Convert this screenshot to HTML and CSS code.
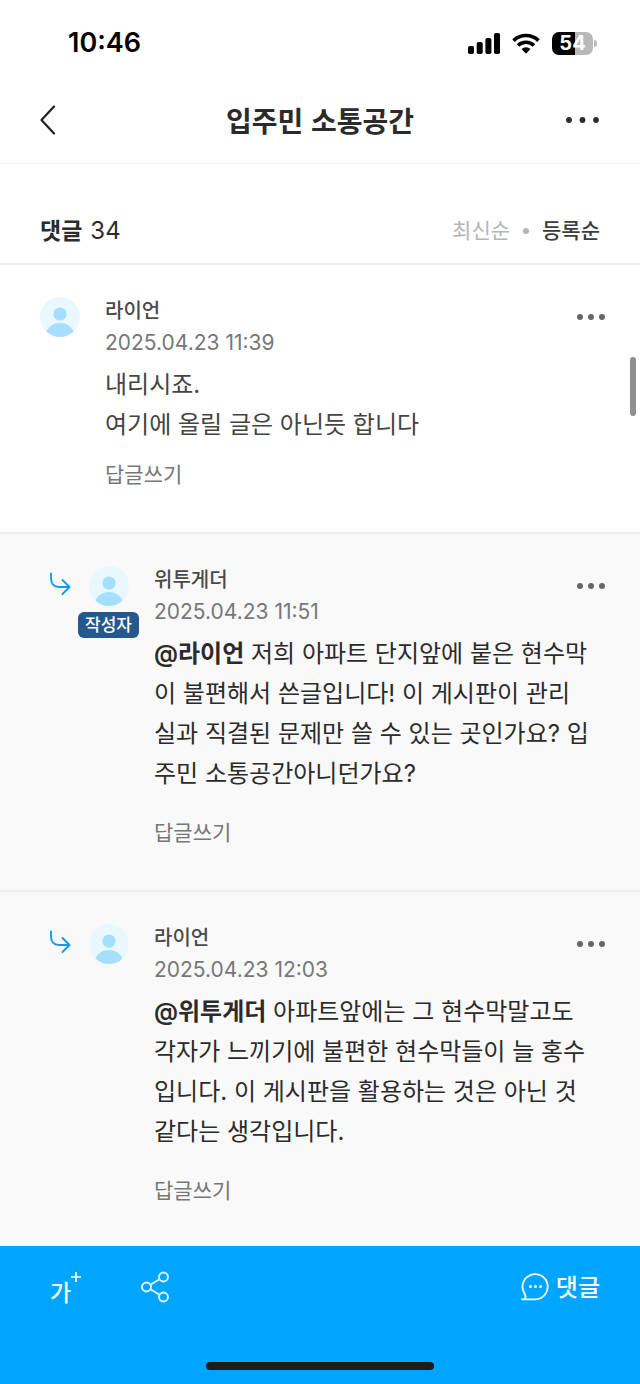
FILE: index.html
```html
<!DOCTYPE html>
<html lang="ko">
<head>
<meta charset="utf-8">
<meta name="viewport" content="width=device-width, initial-scale=1">
<title>입주민 소통공간</title>
<link rel="stylesheet" href="styles.css">
</head>
<body>
<svg class="defs" aria-hidden="true">
  <symbol id="avatar" viewBox="0 0 40 40">
    <circle cx="20" cy="20" r="20" fill="#e9f8ff"/>
    <circle cx="20" cy="17" r="6.600" fill="#a5dfff"/>
    <path d="M6.500 34.500C9 29 14 26 20 26s11 3 13.500 8.500C30 38 25.500 40 20 40S10 38 6.500 34.500Z" fill="#a5dfff"/>
  </symbol>
  <symbol id="dots" viewBox="0 0 30 8">
    <circle cx="4" cy="4" r="3"/><circle cx="15" cy="4" r="3"/><circle cx="26" cy="4" r="3"/>
  </symbol>
  <symbol id="branch" viewBox="0 0 22 24">
    <path d="M2 1.500V6c0 6 3 9 8 9h10M13.500 8l7 7-7 7" fill="none" stroke="#119bf0" stroke-width="1.900" stroke-linecap="round" stroke-linejoin="round"/>
  </symbol>
</svg>
<div class="status">
  <span class="clock">10:46</span>
  <div class="status-icons">
    <svg class="signal" viewBox="0 0 32 21"><rect y="13" width="6" height="8" rx="1.800"/><rect x="8.700" y="9" width="6" height="12" rx="1.800"/><rect x="17.400" y="5" width="6" height="16" rx="1.800"/><rect x="26" width="6" height="21" rx="1.800"/></svg>
    <svg class="wifi" viewBox="0 0 28 21"><g fill="none" stroke="#000" stroke-width="3.600"><path d="M1.500 7.600a18 18 0 0 1 25 0"/><path d="M6 12.500a11.500 11.500 0 0 1 16 0"/></g><path d="M9.500 16a6.600 6.600 0 0 1 9 0L14 20.800Z"/></svg>
    <div class="battery"><span class="level">54</span><i class="cap"></i></div>
  </div>
</div>
<header class="header">
  <button class="icon-btn" aria-label="뒤로"><svg class="back" viewBox="0 0 16 30"><path d="M14 1.500 1.500 15 14 28.500" fill="none" stroke="#222" stroke-width="2.200" stroke-linecap="round" stroke-linejoin="round"/></svg></button>
  <h1 class="title">입주민 소통공간</h1>
  <button class="icon-btn" aria-label="메뉴"><svg class="menu" viewBox="0 0 34 8" fill="#2b2b2b"><circle cx="3" cy="4" r="2.900"/><circle cx="16.500" cy="4" r="2.900"/><circle cx="30" cy="4" r="2.900"/></svg></button>
</header>
<section class="summary">
  <h2 class="count"><b>댓글</b><span>34</span></h2>
  <div class="sort"><button class="sort-btn">최신순</button><i class="sort-dot"></i><button class="sort-btn selected">등록순</button></div>
</section>
<main class="list">
  <article class="comment">
    <div class="who"><svg class="avatar"><use href="#avatar"/></svg></div>
    <div class="content">
      <h3 class="name">라이언</h3>
      <time class="date">2025.04.23 11:39</time>
      <p class="text">내리시죠.<br>여기에 올릴 글은 아닌듯 합니다</p>
      <button class="answer">답글쓰기</button>
    </div>
    <button class="more" aria-label="더보기"><svg class="dots"><use href="#dots"/></svg></button>
  </article>
  <article class="comment reply">
    <svg class="branch"><use href="#branch"/></svg>
    <div class="who"><svg class="avatar"><use href="#avatar"/></svg><span class="badge">작성자</span></div>
    <div class="content">
      <h3 class="name">위투게더</h3>
      <time class="date">2025.04.23 11:51</time>
      <p class="text"><b>@라이언</b> 저희 아파트 단지앞에 붙은 현수막<br>이 불편해서 쓴글입니다! 이 게시판이 관리<br>실과 직결된 문제만 쓸 수 있는 곳인가요? 입<br>주민 소통공간아니던가요?</p>
      <button class="answer">답글쓰기</button>
    </div>
    <button class="more" aria-label="더보기"><svg class="dots"><use href="#dots"/></svg></button>
  </article>
  <article class="comment reply">
    <svg class="branch"><use href="#branch"/></svg>
    <div class="who"><svg class="avatar"><use href="#avatar"/></svg></div>
    <div class="content">
      <h3 class="name">라이언</h3>
      <time class="date">2025.04.23 12:03</time>
      <p class="text"><b>@위투게더</b> 아파트앞에는 그 현수막말고도<br>각자가 느끼기에 불편한 현수막들이 늘 홍수<br>입니다. 이 게시판을 활용하는 것은 아닌 것<br>같다는 생각입니다.</p>
      <button class="answer">답글쓰기</button>
    </div>
    <button class="more" aria-label="더보기"><svg class="dots"><use href="#dots"/></svg></button>
  </article>
</main>
<footer class="bar">
  <div class="tools">
    <button class="tool" aria-label="글자 크게"><span class="ga">가</span><svg class="plus" viewBox="0 0 10 10"><path d="M5 0v10M0 5h10" stroke="#fff" stroke-width="1.700"/></svg></button>
    <button class="tool" aria-label="공유"><svg class="share" viewBox="0 0 28 32" fill="none" stroke="#e4f6ff" stroke-width="1.900"><circle cx="5.500" cy="16" r="4.500"/><circle cx="22.500" cy="6" r="4.500"/><circle cx="22.500" cy="26" r="4.500"/><path d="m9.500 13.700 9-5.400M9.500 18.300l9 5.400"/></svg></button>
    <button class="tool write"><svg class="bubble" viewBox="0 0 28 28"><path d="M1 26.300h13.500A12.600 12.600 0 1 0 3.500 20.500C4.500 22.500 5 23.500 4.500 24.500 4 25.700 2.500 26.300 1 26.300Z" fill="none" stroke="#fff" stroke-width="1.800" stroke-linejoin="round"/><g fill="#fff"><circle cx="9.500" cy="13.500" r="1.500"/><circle cx="14.500" cy="13.500" r="1.500"/><circle cx="19.500" cy="13.500" r="1.500"/></g></svg><span class="write-label">댓글</span></button>
  </div>
  <div class="home"></div>
</footer>
<div class="thumb"></div>
</body>
</html>
```
FILE: styles.css
```css
* { box-sizing: border-box; margin: 0; }
body {
  position: relative;
  display: flex;
  flex-direction: column;
  min-height: 100vh;
  background: #fff;
  color: #2b2b2b;
  font-family: Inter, "Noto Sans CJK KR", sans-serif;
}
button { padding: 0; border: 0; background: none; color: inherit; font: inherit; cursor: pointer; }
svg { display: block; flex: none; }
.defs { position: absolute; width: 0; height: 0; }

.status { display: flex; justify-content: space-between; align-items: center; height: 76px; padding: 10px 47px 0 68px; }
.clock { color: #000; font-size: 27px; font-weight: 600; line-height: 32px; }
.status-icons { display: flex; align-items: center; gap: 12px; }
.signal { width: 32px; height: 21px; }
.wifi { width: 28px; height: 21px; }
.battery { position: relative; width: 41px; height: 23px; border-radius: 7px; background: linear-gradient(90deg, #000 55%, #b9b9b9 55%); }
.level { display: block; color: #fff; font-size: 20px; font-weight: 700; line-height: 23px; text-align: center; }
.cap { position: absolute; top: 8px; right: -4px; width: 3px; height: 7px; border-radius: 0 3px 3px 0; background: #b9b9b9; }

.header { display: flex; justify-content: space-between; align-items: center; height: 88px; padding: 0 40px; border-bottom: 1px solid #f0f0f0; }
.icon-btn { display: flex; align-items: center; width: 34px; height: 40px; }
.back { width: 16px; height: 30px; }
.menu { width: 34px; height: 8px; }
.title { font-family: "Noto Sans CJK KR", sans-serif; font-size: 28px; font-weight: 600; line-height: 40px; }

.summary { display: flex; justify-content: space-between; align-items: center; height: 101px; padding: 34px 40px 0; border-bottom: 2px solid #ededed; }
.count { display: flex; gap: 8px; font-size: 24px; font-weight: 400; line-height: 32px; }
.count b { font-size: 23px; font-weight: 700; }
.sort { display: flex; align-items: center; gap: 13px; color: #b4b4b4; font-size: 21px; line-height: 32px; }
.sort-dot { width: 6px; height: 6px; border-radius: 50%; background: #b4b4b4; }
.selected { color: #3c3c3c; font-weight: 500; }

.list { display: flex; flex-direction: column; flex: 1; }
.comment { position: relative; display: flex; padding: 30px 40px 41px; border-bottom: 2px solid #ededed; }
.who { position: relative; width: 65px; padding-top: 2px; }
.avatar { width: 40px; height: 40px; }
.content { flex: 1; min-width: 0; }
.name { color: #4a4a4a; font-size: 20px; font-weight: 500; line-height: 32px; }
.date { display: block; color: #777; font-size: 21px; line-height: 32px; }
.text { margin-top: 6px; color: #444; font-size: 24px; line-height: 40px; }
.text b { font-weight: 600; }
.answer { margin-top: 14px; color: #777; font-size: 21px; line-height: 32px; }
.more { position: absolute; top: 46px; right: 34px; padding: 2px 0; }
.dots { width: 30px; height: 8px; fill: #666; }

.reply { padding-left: 49px; background: #f9f9f9; }
.reply .text { color: #2b2b2b; }
.reply .answer { margin-top: 23px; }
.reply:last-child { flex: 1; padding-bottom: 32px; border-bottom: 0; }
.branch { width: 22px; height: 24px; margin: 8px 18px 0 0; }
.badge { position: absolute; top: 48px; left: -11px; width: 61px; border-radius: 6px; background: #24588f; color: #fff; font-size: 17px; font-weight: 500; line-height: 26px; text-align: center; }

.bar { padding: 24px 40px 14px; background: #00a5ff; color: #fff; }
.tools { display: flex; align-items: center; height: 36px; margin-bottom: 56px; }
.tool { display: flex; align-items: center; }
.ga { padding: 10px 0 0 10px; font-size: 23px; font-weight: 500; line-height: 32px; }
.plus { width: 10px; height: 10px; margin-bottom: 22px; }
.share { width: 28px; height: 32px; margin: 0 0 2px 60px; }
.write { gap: 7px; margin-left: auto; font-family: "Noto Sans CJK KR", sans-serif; font-size: 24px; font-weight: 500; line-height: 32px; }
.write-label { padding-bottom: 4px; }
.bubble { width: 28px; height: 28px; margin-bottom: 2px; }
.home { width: 36%; min-width: 228px; height: 8px; margin: 0 auto; border-radius: 4px; background: #1c1c1c; }
.thumb { position: absolute; top: 357px; right: 4px; width: 6px; height: 59px; border-radius: 3px; background: #8f8f8f; }
```
